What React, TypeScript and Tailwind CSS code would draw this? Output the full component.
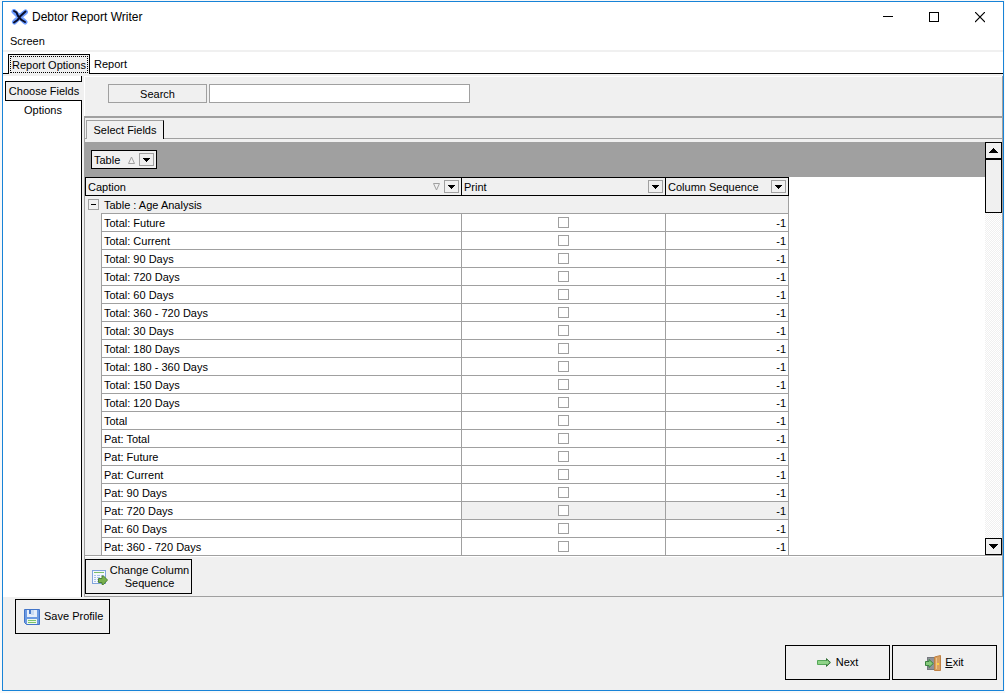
import { useState } from "react"

const fields = [
    "Total: Future",
    "Total: Current",
    "Total: 90 Days",
    "Total: 720 Days",
    "Total: 60 Days",
    "Total: 360 - 720 Days",
    "Total: 30 Days",
    "Total: 180 Days",
    "Total: 180 - 360 Days",
    "Total: 150 Days",
    "Total: 120 Days",
    "Total",
    "Pat: Total",
    "Pat: Future",
    "Pat: Current",
    "Pat: 90 Days",
    "Pat: 720 Days",
    "Pat: 60 Days",
    "Pat: 360 - 720 Days",
]

const FOCUSED_FIELD = "Pat: 720 Days"

function AppIcon() {
    return (
        <svg width="17" height="16" viewBox="0 0 17 16" className="shrink-0">
            <path d="M3 2.5L6 5.5L9 8.5L14 13M14.5 3L9 7.5L3.5 13" stroke="#6f9dff" strokeWidth="5" strokeLinecap="round" strokeLinejoin="round" fill="none" />
            <path d="M3 2L5.5 3.5L7 7L10 10.5L14 13M14.5 2.5L9 7.5L6.5 11L3 13.5" stroke="#0a0f2c" strokeWidth="2" strokeLinecap="round" fill="none" />
        </svg>
    )
}

function SequenceIcon() {
    return (
        <svg width="16" height="16" viewBox="0 0 16 16" className="shrink-0">
            <rect x="0.5" y="1.5" width="13" height="13" fill="#f4f8fd" stroke="#7fa3dc" />
            <path d="M2 3.5H12" stroke="#7cbf6a" />
            <path d="M2 6.5H4M5 6.5H8M9 6.5H12M2 8.5H4M5 8.5H8M2 10.5H4M5 10.5H8M2 12.5H4M5 12.5H6" stroke="#a9c2e8" />
            <path d="M6.5 9.5H10V7L11.5 7L15.5 11L11.5 15.5H10V13.5H6.5Z" fill="#78b04e" stroke="#4c8233" />
        </svg>
    )
}

function SaveIcon() {
    return (
        <svg width="16" height="16" viewBox="0 0 16 16" className="shrink-0">
            <path d="M0.5 0.5H15.5V15.5H2.5L0.5 13.5Z" fill="#6c9ae2" stroke="#4274c8" />
            <rect x="3" y="1" width="10" height="7" fill="#e6eefa" />
            <rect x="5" y="1" width="2" height="4" fill="#4a7bcb" />
            <rect x="7" y="1" width="3" height="5" fill="#c9daf3" />
            <rect x="3" y="10" width="10" height="5" fill="#eef7ea" />
            <path d="M4 11.5H12M4 13.5H12" stroke="#7cc36a" />
        </svg>
    )
}

function NextIcon() {
    return (
        <svg width="14" height="9" viewBox="0 0 14 9" className="shrink-0">
            <path d="M0.5 2.5H9.5V0.8L13.3 4.5L9.5 8.2V6.5H0.5Z" fill="#8fd488" stroke="#55a758" />
            <path d="M9.5 2.5V0.8L13.3 4.5L9.5 8.2V6.5" fill="none" stroke="#356b38" />
        </svg>
    )
}

function ExitIcon() {
    return (
        <svg width="16" height="16" viewBox="0 0 16 16" className="shrink-0">
            <rect x="2.5" y="2.5" width="8" height="12" fill="#8f9299" stroke="#777a80" />
            <path d="M9.5 2L15.5 0.5V15.5H9.5Z" fill="#d9a060" stroke="#bf8144" />
            <path d="M11.5 3V14" stroke="#ecc28d" />
            <rect x="12" y="8" width="2" height="2" fill="#ffd23c" />
            <path d="M0.5 6.5H4V4.5L8.3 8.5L4 12.5V10.5H0.5Z" fill="#86c97a" stroke="#3a8340" />
        </svg>
    )
}

function DropButton({ label }: { label: string }) {
    return (
        <button aria-label={label} className="flex h-[13px] w-[15px] shrink-0 items-center justify-center border border-[#a0a0a0] bg-[#f0f0f0]">
            <svg width="7" height="4" viewBox="0 0 7 4" shapeRendering="crispEdges">
                <path d="M0 0H7V1H6V2H5V3H4V4H3V3H2V2H1V1H0Z" fill="#000" />
            </svg>
        </button>
    )
}

function SortMark({ up }: { up?: boolean }) {
    return (
        <svg width="7" height="8" viewBox="0 0 7 8" className="shrink-0">
            <path d={up ? "M3.5 1L6.5 7.5H0.5Z" : "M3.5 7L6.5 0.5H0.5Z"} fill="none" stroke="#a0a0a0" />
        </svg>
    )
}

function ScrollButton({ up }: { up?: boolean }) {
    return (
        <button
            aria-label={up ? "Scroll up" : "Scroll down"}
            className="flex h-[17px] w-[17px] shrink-0 items-center justify-center border border-black bg-[#f0f0f0]"
        >
            <svg width="9" height="5" viewBox="0 0 9 5" shapeRendering="crispEdges">
                <path
                    d={up ? "M4 0H5V1H6V2H7V3H8V4H9V5H0V4H1V3H2V2H3V1H4Z" : "M0 0H9V1H8V2H7V3H6V4H5V5H4V4H3V3H2V2H1V1H0Z"}
                    fill="#000"
                />
            </svg>
        </button>
    )
}

function TitleBar() {
    return (
        <header className="flex h-[30px] items-center bg-white pl-2">
            <AppIcon />
            <h1 className="ml-1 flex-1 text-[12px]">Debtor Report Writer</h1>
            <button aria-label="Minimize" className="flex h-full w-[46px] items-center justify-center">
                <svg width="10" height="11" viewBox="0 0 10 11"><path d="M0 4.5H10" stroke="#000" /></svg>
            </button>
            <button aria-label="Maximize" className="flex h-full w-[46px] items-center justify-center">
                <svg width="10" height="11" viewBox="0 0 10 11"><rect x="0.5" y="0.5" width="9" height="9" fill="none" stroke="#000" /></svg>
            </button>
            <button aria-label="Close" className="flex h-full w-[46px] items-center justify-center">
                <svg width="10" height="11" viewBox="0 0 10 11"><path d="M0 0L10 10M10 0L0 10" stroke="#000" strokeWidth="1.2" /></svg>
            </button>
        </header>
    )
}

function FieldsTable() {
    const [printed, setPrinted] = useState<string[]>([])

    const toggle = (name: string) =>
        setPrinted((prev) => (prev.includes(name) ? prev.filter((n) => n !== name) : [...prev, name]))

    return (
        <table className="w-[704px] table-fixed border-separate border-spacing-0 text-left">
            <colgroup>
                <col className="w-[16px]" />
                <col className="w-[360px]" />
                <col className="w-[204px]" />
                <col className="w-[124px]" />
            </colgroup>
            <thead>
                <tr className="h-[19px] bg-[#f0f0f0]">
                    <th colSpan={2} className="border-y border-l border-black p-0 pr-[2px] pl-[2px] font-normal">
                        <div className="flex items-center">
                            <span className="flex-1 pt-[2px]">Caption</span>
                            <SortMark />
                            <span className="w-1" />
                            <DropButton label="Filter Caption" />
                        </div>
                    </th>
                    <th className="border-y border-l border-black p-0 pr-[2px] pl-[2px] font-normal">
                        <div className="flex items-center justify-between">
                            <span className="pt-[2px]">Print</span>
                            <DropButton label="Filter Print" />
                        </div>
                    </th>
                    <th className="border border-black p-0 pr-[2px] pl-[2px] font-normal">
                        <div className="flex items-center justify-between">
                            <span className="pt-[2px]">Column Sequence</span>
                            <DropButton label="Filter Column Sequence" />
                        </div>
                    </th>
                </tr>
            </thead>
            <tbody>
                <tr className="h-[17px] bg-[#f0f0f0]">
                    <td colSpan={4} className="border-r border-[#a0a0a0] p-0 pl-[3px]">
                        <div className="flex items-center gap-[5px]">
                            <button aria-label="Collapse group" className="flex h-[11px] w-[11px] items-center justify-center border border-[#a0a0a0]">
                                <span className="h-px w-[5px] bg-black" />
                            </button>
                            <span className="pt-[2px]">Table : Age Analysis</span>
                        </div>
                    </td>
                </tr>
                {fields.map((name) => {
                    const cell = name === FOCUSED_FIELD ? "bg-[#f0f0f0]" : "bg-white"
                    return (
                        <tr key={name} className="h-[18px]">
                            <td className="bg-[#f0f0f0] p-0" />
                            <td className="border-t border-l border-[#a0a0a0] bg-white p-0 pt-[2px] pl-[2px]">{name}</td>
                            <td className={`border-t border-l border-[#a0a0a0] p-0 ${cell}`}>
                                <input
                                    type="checkbox"
                                    aria-label={`Print ${name}`}
                                    checked={printed.includes(name)}
                                    onChange={() => toggle(name)}
                                    className="mx-auto block h-[11px] w-[11px] appearance-none border border-[#a0a0a0] bg-white checked:bg-black"
                                />
                            </td>
                            <td className={`border-x border-t border-[#a0a0a0] p-0 pt-[2px] pr-[2px] text-right ${cell}`}>-1</td>
                        </tr>
                    )
                })}
            </tbody>
        </table>
    )
}

export default function App() {
    const [search, setSearch] = useState("")

    return (
        <div className="flex min-h-screen flex-col bg-[#f8f8f8] pt-px pr-px pb-[2px] pl-[2px] font-['Liberation_Sans',Arial,sans-serif] text-[11px] leading-[13px] text-black">
            <div className="flex flex-1 flex-col border border-[#1883d7] bg-[#f0f0f0]">
                <TitleBar />
                <nav className="flex h-[20px] border-b-2 border-[#f0f0f0] bg-white pl-[7px]">
                    <button className="pt-px">Screen</button>
                </nav>

                {/* Main tabs */}
                <div role="tablist" className="flex h-[22px] items-end bg-white">
                    <div className="w-[5px] border-b border-black" />
                    <button role="tab" aria-selected="true" className="h-[20px] w-[82px] border-x border-t border-black bg-[#f0f0f0] p-px whitespace-nowrap">
                        <span className="flex h-full items-center justify-center border border-dotted border-black pt-px">Report Options</span>
                    </button>
                    <button role="tab" aria-selected="false" className="h-[20px] border-b border-black px-1 pt-[2px]">Report</button>
                    <div className="flex-1 border-b border-black" />
                </div>

                <main className="mt-[2px] flex gap-[2px]">
                    {/* Side tabs */}
                    <div role="tablist" className="flex w-[79px] shrink-0 flex-col bg-white">
                        <div className="h-[5px] border-r border-black" />
                        <button role="tab" aria-selected="true" className="ml-[2px] h-[20px] border-y border-l border-black bg-[#f0f0f0] whitespace-nowrap">
                            Choose Fields
                        </button>
                        <button role="tab" aria-selected="false" className="h-[19px] border-r border-black pl-[2px]">Options</button>
                        <div className="flex-1 border-r border-black" />
                    </div>

                    <div className="flex min-w-0 flex-1 flex-col border-r border-[#a0a0a0]">
                        <div className="flex h-[40px] gap-[2px] border-t border-l border-white pt-[7px] pl-[23px]">
                            <button className="h-[19px] w-[99px] border border-[#a0a0a0] pt-px">Search</button>
                            <input
                                type="text"
                                aria-label="Search"
                                value={search}
                                onChange={(e) => setSearch(e.target.value)}
                                className="h-[19px] w-[261px] border border-[#a0a0a0] bg-white px-1 outline-none"
                            />
                        </div>

                        <section className="border-t-2 border-b border-l border-[#a0a0a0]">
                            <div role="tablist" className="mb-[3px] flex items-end pt-[2px]">
                                <div className="w-px border-b border-[#a0a0a0]" />
                                <button role="tab" aria-selected="true" className="h-[19px] w-[78px] border-t border-r border-l border-t-[#a0a0a0] border-r-black border-l-[#a0a0a0]">
                                    Select Fields
                                </button>
                                <div className="flex-1 border-b border-[#a0a0a0]" />
                            </div>

                            {/* Grid */}
                            <div className="flex border-b border-[#a0a0a0] bg-white">
                                <div className="min-w-0 flex-1 overflow-hidden">
                                    <div className="flex h-[35px] items-center bg-[#a0a0a0] pl-[6px]">
                                        <div className="flex h-[19px] w-[66px] items-center border border-black bg-[#f0f0f0] pr-[2px] pl-[2px]">
                                            <span className="flex-1 pt-[2px]">Table</span>
                                            <SortMark up />
                                            <span className="w-1" />
                                            <DropButton label="Filter Table" />
                                        </div>
                                    </div>
                                    <FieldsTable />
                                </div>
                                <div className="flex w-[17px] flex-col bg-[repeating-conic-gradient(#fff_0_25%,#f0f0f0_0_50%)] bg-[length:2px_2px]">
                                    <ScrollButton up />
                                    <div className="h-[54px] border border-black bg-[#f0f0f0]" />
                                    <div className="flex-1" />
                                    <ScrollButton />
                                </div>
                            </div>

                            <div className="h-[40px] border-t border-white pt-[2px]">
                                <button className="flex h-[35px] w-[107px] items-center border border-black pl-[6px]">
                                    <SequenceIcon />
                                    <span className="flex-1 text-center">Change Column Sequence</span>
                                </button>
                            </div>
                        </section>
                    </div>
                </main>

                <footer className="flex flex-1 flex-col justify-between pt-[2px] pb-[10px]">
                    <button className="ml-3 flex h-[35px] w-[95px] items-center gap-1 border border-black pl-2">
                        <SaveIcon />
                        Save Profile
                    </button>
                    <div className="flex justify-end gap-[2px] pr-[6px]">
                        <button className="flex h-[35px] w-[105px] items-center justify-center gap-[5px] border border-black">
                            <NextIcon />
                            Next
                        </button>
                        <button className="flex h-[35px] w-[105px] items-center justify-center gap-1 border border-black">
                            <ExitIcon />
                            <span><u>E</u>xit</span>
                        </button>
                    </div>
                </footer>
            </div>
        </div>
    )
}
